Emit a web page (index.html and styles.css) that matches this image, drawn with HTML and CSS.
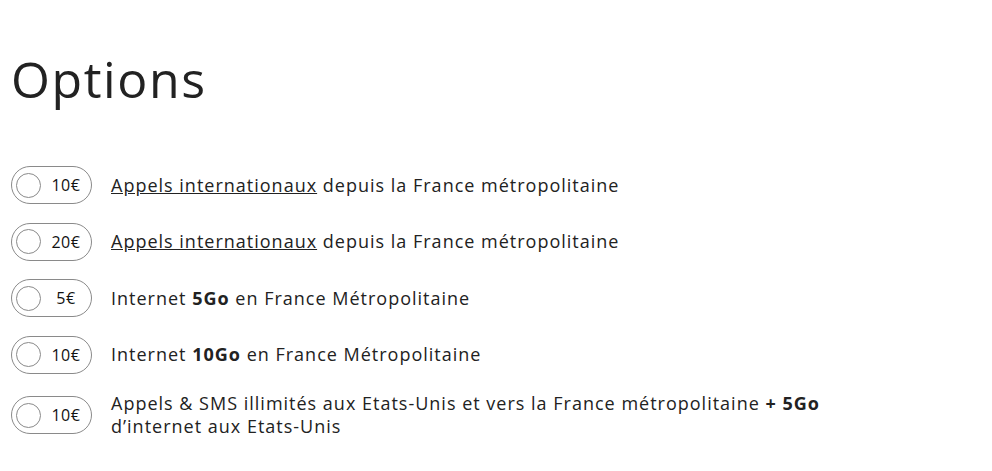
FILE: index.html
```html
<!DOCTYPE html>
<html>
<head>
  <title>Options</title>
  <link rel="stylesheet" href="styles.css">
</head>
<body>
  <h1>Options</h1>

  <ul class="options">
    <li class="option">
      <label class="pill"><span class="radio"></span><span class="price">10€</span></label>
      <p class="desc"><a href="#">Appels internationaux</a> depuis la France métropolitaine</p>
    </li>
    <li class="option">
      <label class="pill"><span class="radio"></span><span class="price">20€</span></label>
      <p class="desc"><a href="#">Appels internationaux</a> depuis la France métropolitaine</p>
    </li>
    <li class="option">
      <label class="pill"><span class="radio"></span><span class="price">5€</span></label>
      <p class="desc">Internet <b>5Go</b> en France Métropolitaine</p>
    </li>
    <li class="option">
      <label class="pill"><span class="radio"></span><span class="price">10€</span></label>
      <p class="desc">Internet <b>10Go</b> en France Métropolitaine</p>
    </li>
    <li class="option">
      <label class="pill"><span class="radio"></span><span class="price">10€</span></label>
      <p class="desc">Appels &amp; SMS illimités aux Etats-Unis et vers la France métropolitaine <b>+ 5Go</b><br>d’internet aux Etats-Unis</p>
    </li>
  </ul>
</body>
</html>
```

FILE: styles.css
```css
body {
  font-family: "Open Sans", Arial, sans-serif;
  color: #222;
  margin: 0;
  padding: 0 11px;
}
h1 {
  font-weight: 400;
  font-size: 50px;
  letter-spacing: 1.6px;
  margin: 47px 0 55px;
  line-height: 64px;
}
.options {
  list-style: none;
  margin: 0;
  padding: 0;
}
.option {
  display: flex;
  align-items: center;
  gap: 19px;
  margin-bottom: 18.5px;
}
.pill {
  width: 81px;
  height: 38px;
  box-sizing: border-box;
  border: 1px solid #8a8a8a;
  border-radius: 19px;
  display: flex;
  align-items: center;
  padding-left: 4px;
  flex-shrink: 0;
}
.radio {
  width: 25px;
  height: 25px;
  box-sizing: border-box;
  border: 1px solid #8a8a8a;
  border-radius: 50%;
}
.price {
  flex: 1;
  text-align: center;
  font-size: 16px;
  letter-spacing: 0.6px;
  color: #111;
}
.desc {
  margin: 0;
  font-size: 18px;
  letter-spacing: 1px;
  line-height: 23px;
}
.desc a {
  color: inherit;
}
.desc b {
  font-weight: 700;
}
```
